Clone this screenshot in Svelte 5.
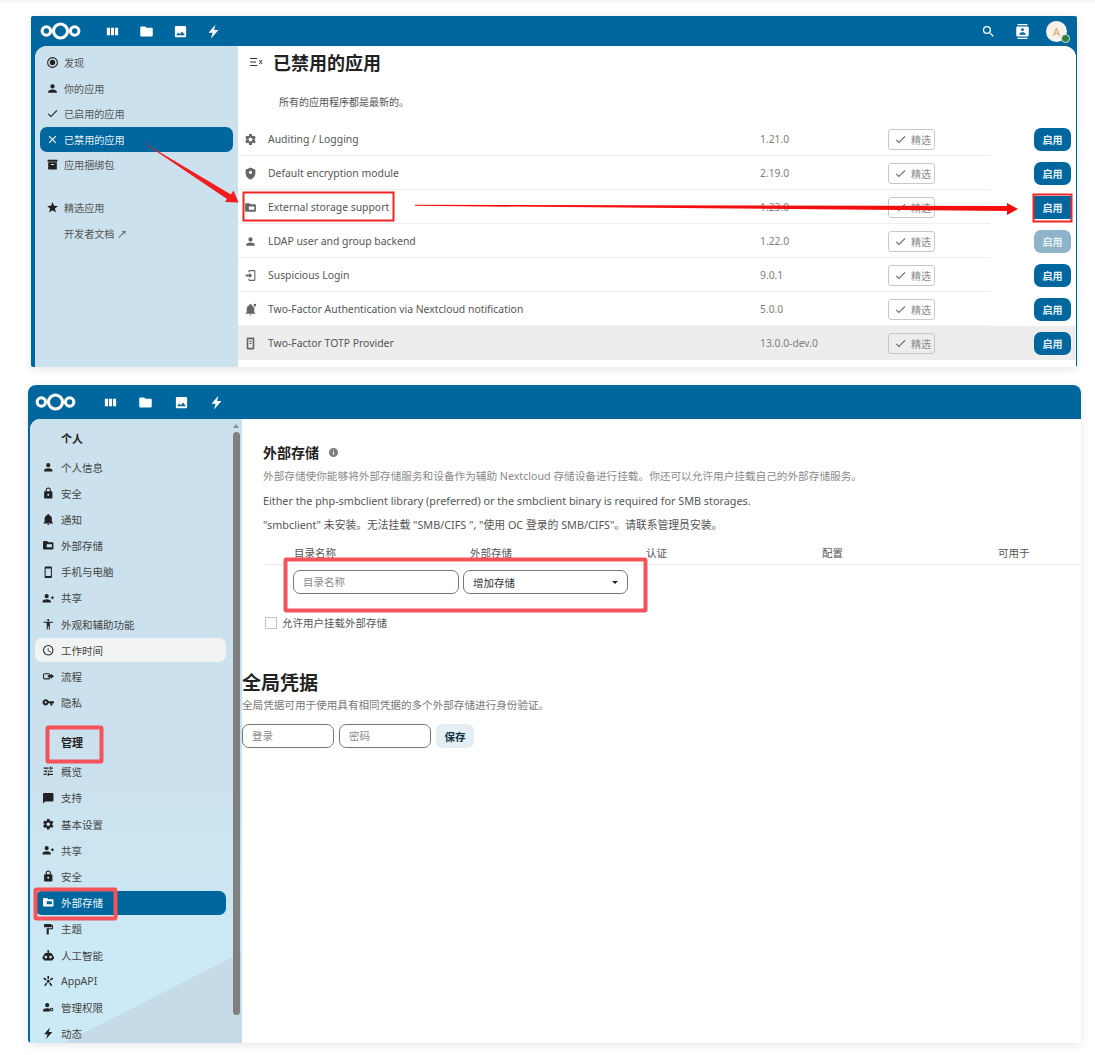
<script>
	const paths = {
		target: 'M12,20A8,8 0 0,1 4,12A8,8 0 0,1 12,4A8,8 0 0,1 20,12A8,8 0 0,1 12,20M12,2A10,10 0 0,0 2,12A10,10 0 0,0 12,22A10,10 0 0,0 22,12A10,10 0 0,0 12,2M12,7A5,5 0 0,0 7,12A5,5 0 0,0 12,17A5,5 0 0,0 17,12A5,5 0 0,0 12,7Z',
		account: 'M12,4A4,4 0 0,1 16,8A4,4 0 0,1 12,12A4,4 0 0,1 8,8A4,4 0 0,1 12,4M12,14C16.42,14 20,15.79 20,18V20H4V18C4,15.79 7.58,14 12,14Z',
		check: 'M21,7L9,19L3.5,13.5L4.91,12.09L9,16.17L19.59,5.59L21,7Z',
		close: 'M19,6.41L17.59,5L12,10.59L6.41,5L5,6.41L10.59,12L5,17.59L6.41,19L12,13.41L17.59,19L19,17.59L13.41,12L19,6.41Z',
		archive: 'M3,3H21V7H3V3M4,8H20V21H4V8M9.5,11A0.5,0.5 0 0,0 9,11.5V13H15V11.5A0.5,0.5 0 0,0 14.5,11H9.5Z',
		star: 'M12,17.27L18.18,21L16.54,13.97L22,9.24L14.81,8.62L12,2L9.19,8.62L2,9.24L7.45,13.97L5.82,21L12,17.27Z',
		lock: 'M12,17A2,2 0 0,0 14,15C14,13.89 13.1,13 12,13A2,2 0 0,0 10,15A2,2 0 0,0 12,17M18,8A2,2 0 0,1 20,10V20A2,2 0 0,1 18,22H6A2,2 0 0,1 4,20V10C4,8.89 4.9,8 6,8H7V6A5,5 0 0,1 12,1A5,5 0 0,1 17,6V8H18M12,3A3,3 0 0,0 9,6V8H15V6A3,3 0 0,0 12,3Z',
		bell: 'M21,19V20H3V19L5,17V11C5,7.9 7.03,5.17 10,4.29C10,4.19 10,4.1 10,4A2,2 0 0,1 12,2A2,2 0 0,1 14,4C14,4.1 14,4.19 14,4.29C16.97,5.17 19,7.9 19,11V17L21,19M14,21A2,2 0 0,1 12,23A2,2 0 0,1 10,21',
		storage: 'M10,4H4C2.89,4 2,4.89 2,6V18A2,2 0 0,0 4,20H20A2,2 0 0,0 22,18V8C22,6.89 21.1,6 20,6H12L10,4ZM9,10H19V16H9Z',
		phone: 'M17,19H7V5H17M17,1H7C5.89,1 5,1.89 5,3V21A2,2 0 0,0 7,23H17A2,2 0 0,0 19,21V3C19,1.89 18.1,1 17,1Z',
		share: 'M9,14C5.67,14 1,15.33 1,18V20H17V18C17,15.33 12.33,14 9,14M21,10V8H19V10H17V12H19V14H21V12H23V10M9,12A4,4 0 0,0 13,8A4,4 0 0,0 9,4A4,4 0 0,0 5,8A4,4 0 0,0 9,12Z',
		human: 'M21 9H15V22H13V16H11V22H9V9H3V7H21M12 2A2 2 0 0 1 14 4A2 2 0 0 1 12 6C10.89 6 10 5.1 10 4C10 2.89 10.89 2 12 2Z',
		clock: 'M12,20A8,8 0 0,0 20,12A8,8 0 0,0 12,4A8,8 0 0,0 4,12A8,8 0 0,0 12,20M12,2A10,10 0 0,1 22,12A10,10 0 0,1 12,22C6.47,22 2,17.5 2,12A10,10 0 0,1 12,2M12.5,7V12.25L17,14.92L16.25,16.15L11,13V7H12.5Z',
		flow: 'M5,6H13A3,3 0 0,1 16,9V10H14V9A1,1 0 0,0 13,8H5A1,1 0 0,0 4,9V15A1,1 0 0,0 5,16H13A1,1 0 0,0 14,15V14H16V15A3,3 0 0,1 13,18H5A3,3 0 0,1 2,15V9A3,3 0 0,1 5,6M17,7L23,12L17,17V14H11V10H17V7Z',
		key: 'M7 14C5.9 14 5 13.1 5 12S5.9 10 7 10 9 10.9 9 12 8.1 14 7 14M12.6 10C11.8 7.7 9.6 6 7 6C3.7 6 1 8.7 1 12S3.7 18 7 18C9.6 18 11.8 16.3 12.6 14H16V18H20V14H23V10H12.6Z',
		tune: 'M3,17V19H9V17H3M3,5V7H13V5H3M13,21V19H21V17H13V15H11V21H13M7,9V11H3V13H7V15H9V9H7M21,13V11H11V13H21M15,9H17V7H21V5H17V3H15V9Z',
		message: 'M20,2H4A2,2 0 0,0 2,4V22L6,18H20A2,2 0 0,0 22,16V4C22,2.89 21.1,2 20,2Z',
		cog: 'M12,15.5A3.5,3.5 0 0,1 8.5,12A3.5,3.5 0 0,1 12,8.5A3.5,3.5 0 0,1 15.5,12A3.5,3.5 0 0,1 12,15.5M19.43,12.97C19.47,12.65 19.5,12.33 19.5,12C19.5,11.67 19.47,11.34 19.43,11L21.54,9.37C21.73,9.22 21.78,8.95 21.66,8.73L19.66,5.27C19.54,5.05 19.27,4.96 19.05,5.05L16.56,6.05C16.04,5.66 15.5,5.32 14.87,5.07L14.5,2.42C14.46,2.18 14.25,2 14,2H10C9.75,2 9.54,2.18 9.5,2.42L9.13,5.07C8.5,5.32 7.96,5.66 7.44,6.05L4.95,5.05C4.73,4.96 4.46,5.05 4.34,5.27L2.34,8.73C2.21,8.95 2.27,9.22 2.46,9.37L4.57,11C4.53,11.34 4.5,11.67 4.5,12C4.5,12.33 4.53,12.65 4.57,12.97L2.46,14.63C2.27,14.78 2.21,15.05 2.34,15.27L4.34,18.73C4.46,18.95 4.73,19.03 4.95,18.95L7.44,17.94C7.96,18.34 8.5,18.68 9.13,18.93L9.5,21.58C9.54,21.82 9.75,22 10,22H14C14.25,22 14.46,21.82 14.5,21.58L14.87,18.93C15.5,18.67 16.04,18.34 16.56,17.94L19.05,18.95C19.27,19.03 19.54,18.95 19.66,18.73L21.66,15.27C21.78,15.05 21.73,14.78 21.54,14.63L19.43,12.97Z',
		paint: 'M18,4V3A1,1 0 0,0 17,2H5A1,1 0 0,0 4,3V7A1,1 0 0,0 5,8H17A1,1 0 0,0 18,7V6H19V10H9V21A1,1 0 0,0 10,22H12A1,1 0 0,0 13,21V12H21V4H18Z',
		robot: 'M12,2A2,2 0 0,1 14,4C14,4.74 13.6,5.39 13,5.73V7H14A7,7 0 0,1 21,14H22A1,1 0 0,1 23,15V18A1,1 0 0,1 22,19H21V20A2,2 0 0,1 19,22H5A2,2 0 0,1 3,20V19H2A1,1 0 0,1 1,18V15A1,1 0 0,1 2,14H3A7,7 0 0,1 10,7H11V5.73C10.4,5.39 10,4.74 10,4A2,2 0 0,1 12,2M7.5,13A2.5,2.5 0 0,0 5,15.5A2.5,2.5 0 0,0 7.5,18A2.5,2.5 0 0,0 10,15.5A2.5,2.5 0 0,0 7.5,13M16.5,13A2.5,2.5 0 0,0 14,15.5A2.5,2.5 0 0,0 16.5,18A2.5,2.5 0 0,0 19,15.5A2.5,2.5 0 0,0 16.5,13Z',
		appapi: 'M12,9A3,3 0 0,1 15,12A3,3 0 0,1 12,15A3,3 0 0,1 9,12A3,3 0 0,1 12,9M10.5,2H13.5V7.5H10.5V2M2.5,7.5L4,5L9,8L7.5,10.5L2.5,7.5M20,5L21.5,7.5L16.5,10.5L15,8L20,5M8,14.5L10.3,16.5L6.5,21.5L4.2,19.5L8,14.5M16,14.5L19.8,19.5L17.5,21.5L13.7,16.5L16,14.5Z',
		admin: 'M10,4A4,4 0 0,1 14,8A4,4 0 0,1 10,12A4,4 0 0,1 6,8A4,4 0 0,1 10,4M10,14C12,14 13.8,14.4 15,15V20H2V18C2,15.8 5.6,14 10,14M18.5,13A3.5,3.5 0 0,1 22,16.5A3.5,3.5 0 0,1 18.5,20A3.5,3.5 0 0,1 15,16.5A3.5,3.5 0 0,1 18.5,13M18.5,15A1.5,1.5 0 0,0 17,16.5A1.5,1.5 0 0,0 18.5,18A1.5,1.5 0 0,0 20,16.5A1.5,1.5 0 0,0 18.5,15Z',
		bolt: 'M15 1L4 14H10.5L8 23L20 9.5H13L15 1Z',
		folder: 'M10,4H4C2.89,4 2,4.89 2,6V18A2,2 0 0,0 4,20H20A2,2 0 0,0 22,18V8C22,6.89 21.1,6 20,6H12L10,4Z',
		image: 'M8.5,13.5L11,16.5L14.5,12L19,18H5M21,19V5C21,3.89 20.1,3 19,3H5A2,2 0 0,0 3,5V19A2,2 0 0,0 5,21H19A2,2 0 0,0 21,19Z',
		dash: 'M3,6H8V18H3ZM9.5,6H14.5V18H9.5ZM16,6H21V18H16Z',
		search: 'M9.5,3A6.5,6.5 0 0,1 16,9.5C16,11.11 15.41,12.59 14.44,13.73L14.71,14H15.5L20.5,19L19,20.5L14,15.5V14.71L13.73,14.44C12.59,15.41 11.11,16 9.5,16A6.5,6.5 0 0,1 3,9.5A6.5,6.5 0 0,1 9.5,3M9.5,5C7,5 5,7 5,9.5C5,12 7,14 9.5,14C12,14 14,12 14,9.5C14,7 12,5 9.5,5Z',
		contacts: 'M20,0H4V2H20V0M4,24H20V22H4V24M20,4H4A2,2 0 0,0 2,6V18A2,2 0 0,0 4,20H20A2,2 0 0,0 22,18V6A2,2 0 0,0 20,4M12,6.75A2.25,2.25 0 0,1 14.25,9A2.25,2.25 0 0,1 12,11.25A2.25,2.25 0 0,1 9.75,9A2.25,2.25 0 0,1 12,6.75M17,17H7V15.5C7,13.83 10.33,13 12,13C13.67,13 17,13.83 17,15.5V17Z',
		navopen: 'M2,5H14V7H2ZM2,11H12V13H2ZM2,17H14V19H2ZM17,8.6L18.4,8.6L20,10.6L21.6,8.6L23,8.6L20.8,12L23,15.4L21.6,15.4L20,13.4L18.4,15.4L17,15.4L19.2,12Z',
		shield: 'M12,1L3,5V11C3,16.55 6.84,21.74 12,23C17.16,21.74 21,16.55 21,11V5L12,1M12,7A3,3 0 0,1 15,10A3,3 0 0,1 12,13A3,3 0 0,1 9,10A3,3 0 0,1 12,7Z',
		login: 'M10,17V14H3V10H10V7L15,12L10,17M10,2H19A2,2 0 0,1 21,4V20A2,2 0 0,1 19,22H10A2,2 0 0,1 8,20V18H10V20H19V4H10V6H8V4A2,2 0 0,1 10,2Z',
		bellbadge: 'M20,1.5A2.5,2.5 0 0,1 22.5,4A2.5,2.5 0 0,1 20,6.5A2.5,2.5 0 0,1 17.5,4A2.5,2.5 0 0,1 20,1.5M21,19V20H3V19L5,17V11C5,7.9 7.03,5.17 10,4.29A2,2 0 0,1 12,2A2,2 0 0,1 14,4.29L16,5.5A4,4 0 0,0 19,8.5V17L21,19M14,21A2,2 0 0,1 12,23A2,2 0 0,1 10,21',
		totp: 'M17,1H7C5.89,1 5,1.89 5,3V21A2,2 0 0,0 7,23H17A2,2 0 0,0 19,21V3C19,1.89 18.1,1 17,1M8,4H16V20H8ZM10,7H14V9H10ZM10,11H14V13H10Z',
		info: 'M12,2A10,10 0 0,0 2,12A10,10 0 0,0 12,22A10,10 0 0,0 22,12A10,10 0 0,0 12,2M13,17H11V11H13V17M13,9H11V7H13V9Z'
	};

	const appNav = [
		{ icon: 'target', label: '发现' },
		{ icon: 'account', label: '你的应用' },
		{ icon: 'check', label: '已启用的应用' },
		{ icon: 'close', label: '已禁用的应用', active: true },
		{ icon: 'archive', label: '应用捆绑包' },
		{ icon: 'star', label: '精选应用', gap: true },
		{ icon: '', label: '开发者文档 ↗' }
	];

	const apps = [
		{ icon: 'cog', name: 'Auditing / Logging', version: '1.21.0' },
		{ icon: 'shield', name: 'Default encryption module', version: '2.19.0' },
		{ icon: 'storage', name: 'External storage support', version: '1.23.0', boxed: true },
		{ icon: 'account', name: 'LDAP user and group backend', version: '1.22.0', disabled: true },
		{ icon: 'login', name: 'Suspicious Login', version: '9.0.1' },
		{ icon: 'bellbadge', name: 'Two-Factor Authentication via Nextcloud notification', version: '5.0.0' },
		{ icon: 'totp', name: 'Two-Factor TOTP Provider', version: '13.0.0-dev.0', hover: true }
	];

	const personal = [
		{ icon: 'account', label: '个人信息' },
		{ icon: 'lock', label: '安全' },
		{ icon: 'bell', label: '通知' },
		{ icon: 'storage', label: '外部存储' },
		{ icon: 'phone', label: '手机与电脑' },
		{ icon: 'share', label: '共享' },
		{ icon: 'human', label: '外观和辅助功能' },
		{ icon: 'clock', label: '工作时间', hover: true },
		{ icon: 'flow', label: '流程' },
		{ icon: 'key', label: '隐私' }
	];

	const admin = [
		{ icon: 'tune', label: '概览' },
		{ icon: 'message', label: '支持' },
		{ icon: 'cog', label: '基本设置' },
		{ icon: 'share', label: '共享' },
		{ icon: 'lock', label: '安全' },
		{ icon: 'storage', label: '外部存储', active: true },
		{ icon: 'paint', label: '主题' },
		{ icon: 'robot', label: '人工智能' },
		{ icon: 'appapi', label: 'AppAPI' },
		{ icon: 'admin', label: '管理权限' },
		{ icon: 'bolt', label: '动态' }
	];

	const topNav = ['dash', 'folder', 'image', 'bolt'];
	const columns = ['目录名称', '外部存储', '认证', '配置', '可用于'];
</script>

{#snippet icon(name, cls = 'ic')}
	<svg class={cls} viewBox="0 0 24 24" aria-hidden="true"><path fill-rule="evenodd" d={paths[name]} /></svg>
{/snippet}

{#snippet logo()}
	<svg class="logo" viewBox="0 0 42 20" aria-hidden="true">
		<circle cx="6.5" cy="10" r="4.3" />
		<circle cx="21" cy="10" r="7.2" />
		<circle cx="35.5" cy="10" r="4.3" />
	</svg>
{/snippet}

{#snippet sideItem(item)}
	<div class="side-item" class:active={item.active} class:hover={item.hover} class:gap={item.gap}>
		<span class="side-icon">
			{#if item.icon}{@render icon(item.icon)}{/if}
		</span>
		<span>{item.label}</span>
	</div>
{/snippet}

<div class="page">
	<section class="shot first">
		<header class="topbar">
			{@render logo()}
			<nav class="top-nav">
				{#each topNav as name}
					<span class="top-btn">{@render icon(name)}</span>
				{/each}
			</nav>
			<div class="top-right">
				<span class="top-btn">{@render icon('search')}</span>
				<span class="top-btn">{@render icon('contacts')}</span>
				<span class="avatar">A<i></i></span>
			</div>
		</header>
		<div class="body">
			<aside class="side">
				{#each appNav as item}
					{@render sideItem(item)}
				{/each}
			</aside>
			<main class="apps">
				<div class="apps-head">
					{@render icon('navopen', 'ic toggle')}
					<h1>已禁用的应用</h1>
				</div>
				<p class="uptodate">所有的应用程序都是最新的。</p>
				<div class="rows">
					{#each apps as app}
						<div class="row" class:hover={app.hover}>
							<span class="row-icon">{@render icon(app.icon)}</span>
							<span class="row-name">{app.name}</span>
							<span class="row-version">{app.version}</span>
							<span class="row-cell">
								<span class="tag">{@render icon('check')}精选</span>
							</span>
							<button class="enable" class:off={app.disabled} class:boxed={app.boxed}>启用</button>
						</div>
					{/each}
				</div>
			</main>
		</div>
	</section>

	<section class="shot second">
		<header class="topbar">
			{@render logo()}
			<nav class="top-nav">
				{#each topNav as name}
					<span class="top-btn">{@render icon(name)}</span>
				{/each}
			</nav>
		</header>
		<div class="body">
			<aside class="side settings">
				<h3 class="side-title">个人</h3>
				{#each personal as item}
					{@render sideItem(item)}
				{/each}
				<h3 class="side-title admin">管理</h3>
				{#each admin as item}
					{@render sideItem(item)}
				{/each}
				<span class="scroll-arrow"></span>
				<span class="scroll-thumb"></span>
			</aside>
			<main class="storage">
				<div class="ext">
					<h2>外部存储 {@render icon('info', 'ic info')}</h2>
					<p class="muted">外部存储使你能够将外部存储服务和设备作为辅助 Nextcloud 存储设备进行挂载。你还可以允许用户挂载自己的外部存储服务。</p>
					<p>Either the php-smbclient library (preferred) or the smbclient binary is required for SMB storages.</p>
					<p>"smbclient" 未安装。无法挂载 "SMB/CIFS ", "使用 OC 登录的 SMB/CIFS"。请联系管理员安装。</p>
					<div class="thead">
						{#each columns as col}
							<span>{col}</span>
						{/each}
					</div>
					<div class="mount">
						<input class="field wide" placeholder="目录名称" />
						<div class="field select">增加存储<i class="caret"></i></div>
					</div>
					<label class="allow"><span class="box"></span>允许用户挂载外部存储</label>
				</div>
				<div class="global">
					<h2>全局凭据</h2>
					<p>全局凭据可用于使用具有相同凭据的多个外部存储进行身份验证。</p>
					<div class="cred">
						<input class="field" placeholder="登录" />
						<input class="field" placeholder="密码" />
						<button class="save">保存</button>
					</div>
				</div>
			</main>
		</div>
	</section>

	<svg class="marks" viewBox="0 0 1095 1055" aria-hidden="true">
		<g fill="none" stroke="#f02525" stroke-width="2">
			<rect x="243.5" y="192.5" width="150" height="28" />
			<rect x="1033.5" y="194.5" width="38" height="27" />
		</g>
		<path d="M141,141 L231,194.5 L233.5,190.5 L238.5,202.5 L225,202 L227,199 Z" fill="#f21c1c" />
		<path d="M415,204.8 L1007,206 L1007,203 L1018,209 L1007,215 L1007,211 L415,205.8 Z" fill="#f40f0f" />
		<g fill="none" stroke="#f5525a" stroke-width="4">
			<rect x="285.5" y="559.5" width="360" height="51" rx="1" />
			<rect x="47.5" y="727.5" width="54" height="34" rx="1" />
			<rect x="35.5" y="889.5" width="80" height="29" rx="1" />
		</g>
	</svg>
</div>

<style>
	:global(body) {
		margin: 0;
		background: #fff;
	}

	.page {
		position: relative;
		width: 1095px;
		height: 1055px;
		padding-top: 16px;
		box-sizing: border-box;
		overflow: hidden;
		background: linear-gradient(#f3f3f3, #fff 4px) no-repeat top / 100% 4px;
		font-family: 'Noto Sans', 'Noto Sans CJK SC', sans-serif;
		font-size: 10.4px;
		color: #444;
	}

	.shot {
		display: flex;
		flex-direction: column;
		background: #00679e;
		box-shadow: 0 2px 10px rgba(0, 0, 0, 0.1);
		overflow: hidden;
	}

	.first {
		width: 1046px;
		height: 351px;
		margin-left: 31px;
		padding: 0 1px 0 4px;
		box-sizing: border-box;
		border-radius: 2px;
	}

	.second {
		width: 1053px;
		height: 658px;
		margin: 18px 0 0 28px;
		padding-left: 2px;
		box-sizing: border-box;
		border-radius: 8px 8px 0 4px;
	}

	.topbar {
		display: flex;
		align-items: center;
		flex: none;
		height: 30px;
		padding-left: 5px;
		color: #fff;
	}

	.second .topbar {
		height: 34px;
		padding-left: 5px;
	}

	.logo {
		flex: none;
		width: 41px;
		height: 20px;
		fill: none;
		stroke: #fff;
		stroke-width: 3.2;
	}

	.top-nav {
		display: flex;
		margin-left: 15px;
	}

	.second .top-nav {
		margin-left: 17px;
	}

	.top-btn {
		display: flex;
		align-items: center;
		justify-content: center;
		width: 33.7px;
		height: 24px;
	}

	.second .top-btn {
		width: 35.3px;
	}

	.top-btn .ic {
		width: 15px;
		height: 15px;
		fill: #fff;
	}

	.top-right {
		display: flex;
		align-items: center;
		margin-left: auto;
		margin-right: 9px;
	}

	.top-right .top-btn + .top-btn {
		margin-right: 7px;
	}

	.avatar {
		position: relative;
		display: flex;
		align-items: center;
		justify-content: center;
		width: 21px;
		height: 21px;
		border-radius: 50%;
		background: #f8f3ea;
		color: #dda06c;
		font-size: 11px;
	}

	.avatar i {
		position: absolute;
		right: -3px;
		bottom: -1px;
		width: 7px;
		height: 7px;
		border-radius: 50%;
		background: #2f7d3a;
		border: 1px solid #d6e6ee;
	}

	.body {
		display: flex;
		flex: 1;
		min-height: 0;
		background: #fff;
		border-radius: 12px 12px 0 0;
		overflow: hidden;
	}

	.second .body {
		border-radius: 10px 0 0 0;
	}

	.side {
		position: relative;
		flex: none;
		box-sizing: border-box;
		width: 203px;
		padding: 4px 5px 0;
		background: #cbe1ed;
		overflow: hidden;
	}

	.side-item {
		display: flex;
		align-items: center;
		height: 25.5px;
		border-radius: 7px;
		color: #555;
		font-size: 10.1px;
	}

	.side-item.gap {
		margin-top: 17.5px;
	}

	.side-icon {
		display: flex;
		justify-content: center;
		flex: none;
		width: 24px;
	}

	.side-icon .ic {
		width: 13px;
		height: 13px;
		fill: #222;
	}

	.side-item.active {
		background: #00679e;
		color: #e6f0f6;
	}

	.side-item.active .ic {
		fill: #fff;
	}

	.side-item.hover {
		background: #f2f4f4;
	}

	.settings {
		width: 212px;
		padding: 6px 16px 0 5px;
		background:
			linear-gradient(153deg, transparent 87.5%, #c6dbe8 87.7%),
			linear-gradient(180deg, #cbe1ed 0%, #cbe1ed 55%, #cceaf6 88%);
	}

	.side-title {
		display: flex;
		align-items: center;
		height: 26px;
		margin: 0 0 4px;
		padding-left: 26px;
		font-size: 11px;
		font-weight: 700;
		color: #222;
	}

	.side-title.admin {
		margin: 14px 0 5px;
	}

	.settings .side-item {
		height: 24px;
		margin-bottom: 2.2px;
		color: #444;
		font-size: 10.5px;
	}

	.settings .side-item.active {
		color: #f2f7fa;
	}

	.settings .side-icon {
		width: 26px;
		margin-right: 0;
	}

	.settings .side-icon .ic {
		width: 12.5px;
		height: 12.5px;
	}

	.scroll-arrow {
		position: absolute;
		top: 5px;
		left: 203px;
		border: 3px solid transparent;
		border-top: 0;
		border-bottom: 4px solid #8a8f92;
	}

	.scroll-thumb {
		position: absolute;
		top: 13px;
		left: 203px;
		width: 7px;
		height: 583px;
		border-radius: 4px;
		background: #808080;
	}

	.apps {
		flex: 1;
		min-width: 0;
		background: #fff;
	}

	.apps-head {
		display: flex;
		align-items: center;
		height: 32px;
		color: #222;
	}

	.toggle {
		width: 14px;
		height: 14px;
		margin: 0 10px 0 11px;
		fill: #333;
	}

	h1 {
		margin: 0;
		font-size: 18px;
		font-weight: 700;
		color: #222;
	}

	.uptodate {
		margin: 16px 0 0 41px;
		height: 28px;
		font-size: 10px;
		line-height: 16px;
		color: #555;
	}

	.row {
		display: grid;
		grid-template-columns: 30px 492px 128px 146px 37px;
		align-items: center;
		height: 34px;
		background: linear-gradient(#eeeeee, #eeeeee) no-repeat left bottom / 752px 1px;
		color: #666;
	}

	.row.hover {
		background: #ededed;
	}

	.row-icon {
		display: flex;
		justify-content: center;
		padding-right: 6px;
	}

	.row-icon .ic {
		width: 13px;
		height: 13px;
		fill: #666;
	}

	.row-name {
		padding-bottom: 1px;
		color: #555;
		font-size: 10.4px;
	}

	.row-version {
		padding-bottom: 1px;
		font-size: 10.3px;
		color: #808080;
	}

	.row-cell {
		display: flex;
	}

	.tag {
		display: flex;
		align-items: center;
		gap: 4px;
		box-sizing: border-box;
		width: 47px;
		height: 21px;
		padding-left: 5px;
		border: 1px solid #c8c8c8;
		border-radius: 3px;
		font-size: 10px;
		color: #8a8a8a;
		background: #fff;
	}

	.row.hover .tag {
		background: #ededed;
	}

	.tag .ic {
		width: 13px;
		height: 13px;
		fill: #666;
	}

	.enable {
		width: 37px;
		height: 23px;
		padding: 0;
		border: 0;
		border-radius: 7px;
		background: #00679e;
		color: #e8f1f6;
		font: 700 10px 'Noto Sans', 'Noto Sans CJK SC', sans-serif;
	}

	.enable.off {
		background: #8fb3c8;
	}

	.enable.boxed {
		border-radius: 1px;
	}

	.storage {
		flex: 1;
		min-width: 0;
		background: #fff;
		font-size: 10.8px;
		color: #555;
	}

	.ext {
		padding: 23px 0 0 21px;
	}

	.ext h2 {
		display: flex;
		align-items: center;
		gap: 9px;
		height: 20px;
		margin: 0 0 2px;
		font-size: 14px;
		font-weight: 700;
		color: #222;
	}

	.info {
		width: 11px;
		height: 11px;
		fill: #808080;
	}

	.ext p {
		height: 24.5px;
		margin: 0;
		line-height: 24.5px;
		white-space: nowrap;
	}

	.ext .muted {
		font-size: 10.65px;
		color: #8a8a8a;
	}

	.thead {
		display: grid;
		grid-template-columns: repeat(5, 176px);
		height: 22px;
		padding-left: 31px;
		margin-top: 4.5px;
		line-height: 22px;
		border-bottom: 1px solid #eeeeee;
		font-size: 10.5px;
		color: #555;
	}

	.mount {
		display: flex;
		gap: 4px;
		margin: 5px 0 0 30px;
	}

	.field {
		box-sizing: border-box;
		width: 92px;
		height: 24px;
		padding: 0 9px;
		border: 1px solid #777;
		border-radius: 7px;
		background: #fff;
		font: 10.5px 'Noto Sans', 'Noto Sans CJK SC', sans-serif;
		color: #333;
		outline: none;
	}

	.field::placeholder {
		color: #8a8a8a;
		opacity: 1;
	}

	.wide {
		width: 166px;
	}

	.select {
		display: flex;
		align-items: center;
		justify-content: space-between;
		width: 165px;
	}

	.caret {
		border: 3px solid transparent;
		border-top: 3px solid #222;
		border-bottom: 0;
	}

	.allow {
		display: flex;
		align-items: center;
		gap: 5px;
		margin: 20.5px 0 0 2px;
		height: 16px;
		font-size: 10.5px;
		color: #555;
	}

	.box {
		width: 10px;
		height: 10px;
		border: 1px solid #c4c4c4;
		background: #fff;
	}

	.global {
		margin-top: 38.5px;
	}

	.global h2 {
		height: 28px;
		margin: 0;
		font-size: 19px;
		line-height: 28px;
		font-weight: 700;
		color: #222;
	}

	.global p {
		height: 16px;
		margin: 0;
		font-size: 10.6px;
		line-height: 16px;
		color: #777;
	}

	.cred {
		display: flex;
		gap: 5px;
		margin-top: 11px;
	}

	.save {
		width: 38px;
		height: 24px;
		padding: 0;
		border: 0;
		border-radius: 7px;
		background: #e3eff5;
		color: #12303f;
		font: 700 10.5px 'Noto Sans', 'Noto Sans CJK SC', sans-serif;
	}

	.marks {
		position: absolute;
		inset: 0;
		width: 1095px;
		height: 1055px;
		pointer-events: none;
	}
</style>
